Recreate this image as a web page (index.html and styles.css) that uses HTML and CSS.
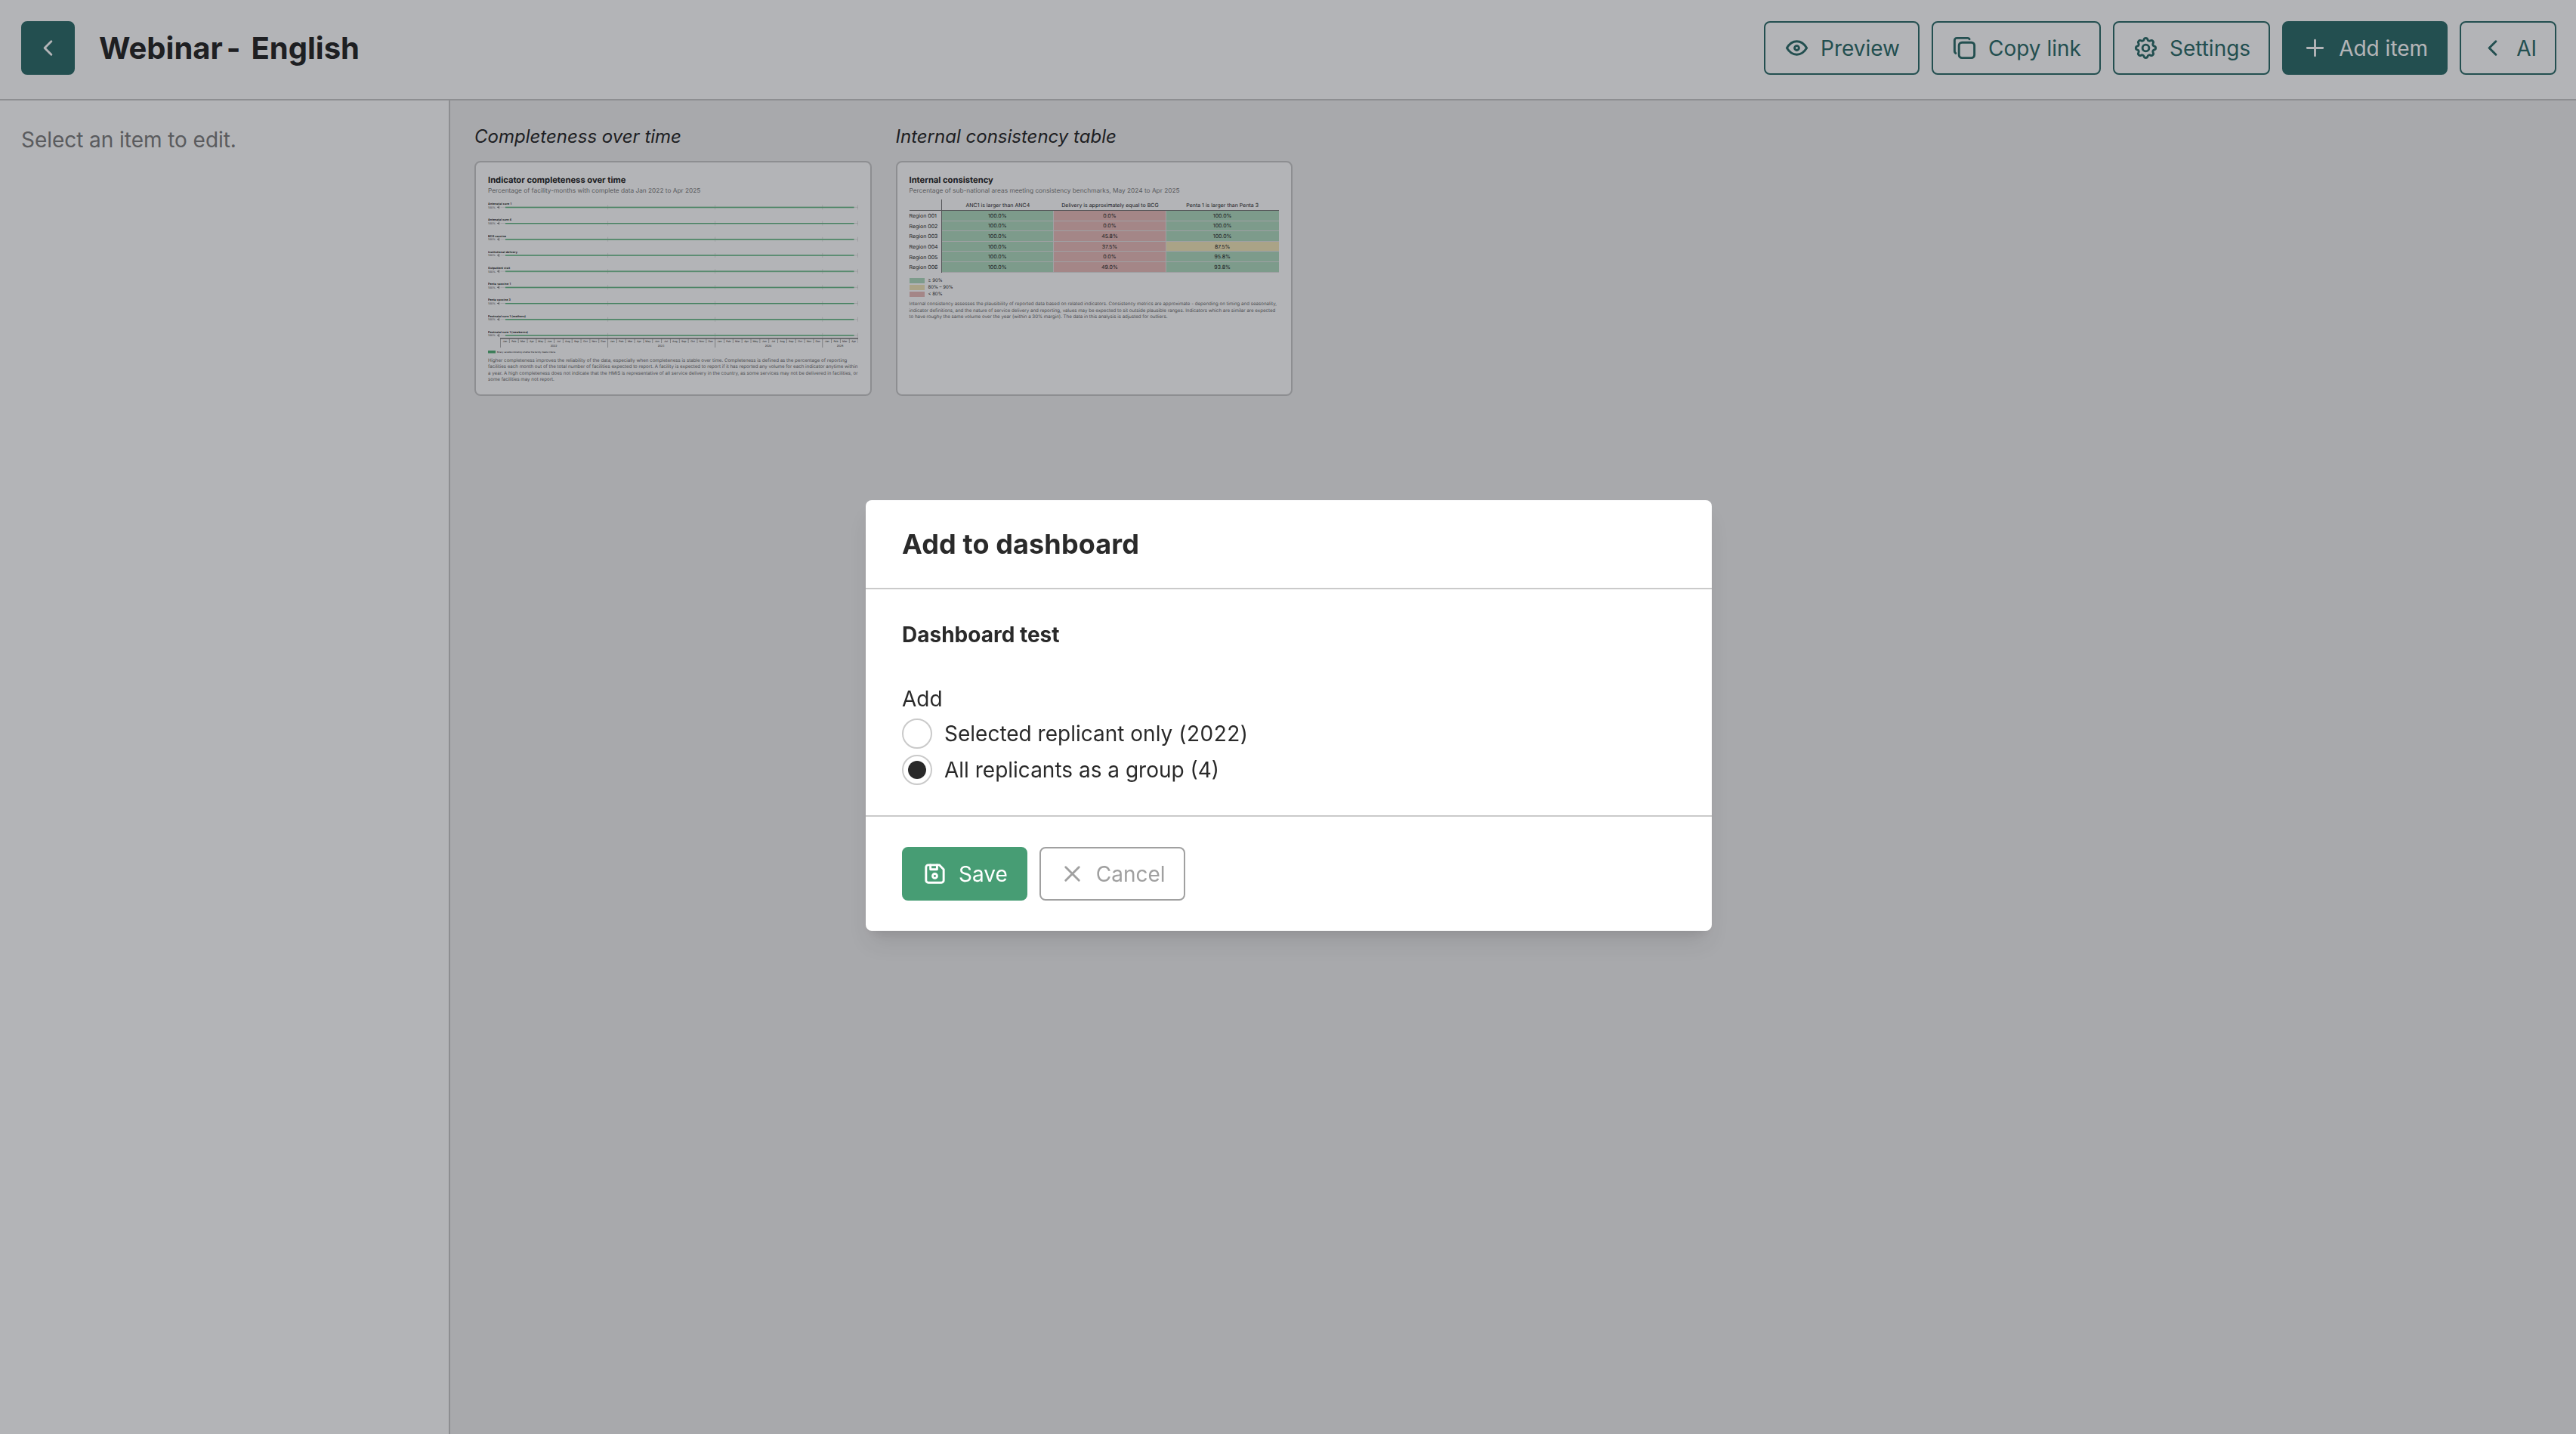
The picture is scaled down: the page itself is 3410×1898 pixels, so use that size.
FILE: index.html
```html
<!DOCTYPE html>
<html lang="en">
<head>
  <meta charset="UTF-8">
  <title>Webinar - English</title>
  <link rel="stylesheet" href="styles.css">
</head>
<body>
  <header class="topbar">
    <button class="btn btn-solid">
      <svg class="icon" viewBox="0 0 24 24"><path d="M15 6l-6 6l6 6"/></svg>
    </button>
    <h1>Webinar<span class="dash">-</span> &nbsp;English</h1>
    <div class="actions">
      <button class="btn">
        <svg class="icon" viewBox="0 0 24 24"><path d="M10 12a2 2 0 1 0 4 0a2 2 0 0 0 -4 0"/><path d="M21 12c-2.400 4 -5.400 6 -9 6c-3.600 0 -6.600 -2 -9 -6c2.400 -4 5.400 -6 9 -6c3.600 0 6.600 2 9 6"/></svg>
        Preview
      </button>
      <button class="btn">
        <svg class="icon" viewBox="0 0 24 24"><path d="M7 9.667a2.667 2.667 0 0 1 2.667 -2.667h8.666a2.667 2.667 0 0 1 2.667 2.667v8.666a2.667 2.667 0 0 1 -2.667 2.667h-8.666a2.667 2.667 0 0 1 -2.667 -2.667z"/><path d="M4.012 16.737a2.005 2.005 0 0 1 -1.012 -1.737v-10c0 -1.100 .9 -2 2 -2h10c.75 0 1.158 .385 1.500 1"/></svg>
        Copy link
      </button>
      <button class="btn">
        <svg class="icon" viewBox="0 0 24 24"><path d="M10.325 4.317c.426 -1.756 2.924 -1.756 3.350 0a1.724 1.724 0 0 0 2.573 1.066c1.543 -.94 3.310 .826 2.370 2.370a1.724 1.724 0 0 0 1.065 2.572c1.756 .426 1.756 2.924 0 3.350a1.724 1.724 0 0 0 -1.066 2.573c.94 1.543 -.826 3.310 -2.370 2.370a1.724 1.724 0 0 0 -2.572 1.065c-.426 1.756 -2.924 1.756 -3.350 0a1.724 1.724 0 0 0 -2.573 -1.066c-1.543 .94 -3.310 -.826 -2.370 -2.370a1.724 1.724 0 0 0 -1.065 -2.572c-1.756 -.426 -1.756 -2.924 0 -3.350a1.724 1.724 0 0 0 1.066 -2.573c-.94 -1.543 .826 -3.310 2.370 -2.370c1 .608 2.296 .07 2.572 -1.065z"/><path d="M9 12a3 3 0 1 0 6 0a3 3 0 0 0 -6 0"/></svg>
        Settings
      </button>
      <button class="btn btn-solid">
        <svg class="icon" viewBox="0 0 24 24"><path d="M12 5v14M5 12h14"/></svg>
        Add item
      </button>
      <button class="btn">
        <svg class="icon" viewBox="0 0 24 24"><path d="M15 6l-6 6l6 6"/></svg>
        AI
      </button>
    </div>
  </header>

  <div class="layout">
    <aside class="sidebar">Select an item to edit.</aside>
    <main class="items">
      <section class="item">
        <div class="item-label">Completeness over time</div>
        <div class="card">
          <h3>Indicator completeness over time</h3>
          <p class="sub">Percentage of facility-months with complete data Jan 2022 to Apr 2025</p>
          <svg class="chart" id="chart" viewBox="0 0 490 206"></svg>
          <p class="note">
            Higher completeness improves the reliability of the data, especially when completeness is stable over time. Completeness is defined as the percentage of reporting<br>
            facilities each month out of the total number of facilities expected to report. A facility is expected to report if it has reported any volume for each indicator anytime within<br>
            a year. A high completeness does not indicate that the HMIS is representative of all service delivery in the country, as some services may not be delivered in facilities, or<br>
            some facilities may not report.
          </p>
        </div>
      </section>
      <section class="item">
        <div class="item-label">Internal consistency table</div>
        <div class="card">
          <h3>Internal consistency</h3>
          <p class="sub">Percentage of sub-national areas meeting consistency benchmarks, May 2024 to Apr 2025</p>
          <table>
            <thead>
              <tr><th></th><th>ANC1 is larger than ANC4</th><th>Delivery is approximately equal to BCG</th><th>Penta 1 is larger than Penta 3</th></tr>
            </thead>
            <tbody>
              <tr><th>Region 001</th><td class="good">100.0%</td><td class="bad">0.0%</td><td class="good">100.0%</td></tr>
              <tr><th>Region 002</th><td class="good">100.0%</td><td class="bad">0.0%</td><td class="good">100.0%</td></tr>
              <tr><th>Region 003</th><td class="good">100.0%</td><td class="bad">45.8%</td><td class="good">100.0%</td></tr>
              <tr><th>Region 004</th><td class="good">100.0%</td><td class="bad">37.5%</td><td class="mid">87.5%</td></tr>
              <tr><th>Region 005</th><td class="good">100.0%</td><td class="bad">0.0%</td><td class="good">95.8%</td></tr>
              <tr><th>Region 006</th><td class="good">100.0%</td><td class="bad">49.0%</td><td class="good">93.8%</td></tr>
            </tbody>
          </table>
          <ul class="legend">
            <li><i class="good"></i>≥ 90%</li>
            <li><i class="mid"></i>80% – 90%</li>
            <li><i class="bad"></i>&lt; 80%</li>
          </ul>
          <p class="note">
            Internal consistency assesses the plausibility of reported data based on related indicators. Consistency metrics are approximate - depending on timing and seasonality,<br>
            indicator definitions, and the nature of service delivery and reporting, values may be expected to sit outside plausible ranges. Indicators which are similar are expected<br>
            to have roughy the same volume over the year (within a 30% margin). The data in this analysis is adjusted for outliers.
          </p>
        </div>
      </section>
    </main>
  </div>

  <div class="overlay">
    <div class="modal">
      <div class="modal-header">Add to dashboard</div>
      <div class="modal-body">
        <div class="modal-name">Dashboard test</div>
        <div class="field-label">Add</div>
        <label class="radio"><span class="dot"></span><span>Selected replicant only <span class="year">(2022)</span></span></label>
        <label class="radio checked"><span class="dot"></span>All replicants as a group (4)</label>
      </div>
      <div class="modal-footer">
        <button class="btn btn-save">
          <svg class="icon" viewBox="0 0 24 24"><path d="M6 4h10l4 4v10a2 2 0 0 1 -2 2h-12a2 2 0 0 1 -2 -2v-12a2 2 0 0 1 2 -2"/><path d="M10 14a2 2 0 1 0 4 0a2 2 0 1 0 -4 0"/><path d="M14 4v4h-6v-4"/></svg>
          Save
        </button>
        <button class="btn btn-cancel">
          <svg class="icon" viewBox="0 0 24 24"><path d="M18 6l-12 12M6 6l12 12"/></svg>
          Cancel
        </button>
      </div>
    </div>
  </div>

  <script>
    const indicators = [
      "Antenatal care 1", "Antenatal care 4", "BCG vaccine",
      "Institutional delivery", "Outpatient visit", "Penta vaccine 1",
      "Penta vaccine 3", "Postnatal care 1 (mothers)", "Postnatal care 1 (newborns)"
    ];
    const widths = [31, 31, 24, 39, 29, 30, 30, 50, 53];
    const months = ["Jan", "Feb", "Mar", "Apr", "May", "Jun", "Jul", "Aug", "Sep", "Oct", "Nov", "Dec"];
    const left = 16.5, step = 11.84;
    let out = "";

    indicators.forEach((name, i) => {
      const y = 11.3 + i * 21.2;
      out += `<text class="name" x="0" y="${y - 3.2}" textLength="${widths[i]}">${name}</text>
        <text class="tick" x="0" y="${y + 1.5}" textLength="10">100%</text>
        <path class="mark" d="M12 ${y}h3M14.5 ${y - 2}v4"/>
        <path class="grid" d="M16.5 ${y}H490M158.6 ${y - 3}v6M300.6 ${y - 3}v6M442.7 ${y - 3}v6M489.5 ${y - 3}v6"/>
        <path class="band" d="M23 ${y + .3}H484.5"/>
        <path class="line" d="M23 ${y}H484.5"/>`;
    });

    out += `<path class="axis" d="M16 185H490"/>`;
    for (let m = 0; m <= 40; m++) {
      const x = left + m * step;
      const long = m % 12 === 0;
      out += `<path class="sep" d="M${x} 185v${long ? 12 : 6}"/>`;
      if (m < 40) out += `<text class="month" x="${x + step / 2}" y="190.3">${months[m % 12]}</text>`;
    }
    [[2022, 71], [2023, 213], [2024, 355], [2025, 450]].forEach(([year, x]) => {
      out += `<text class="month" x="${x + left - 16.5 + 16}" y="196.2">${year}</text>`;
    });
    out += `<rect class="swatch" x="0" y="201" width="10" height="3.500"/>
      <text class="key" x="12" y="203.8" textLength="77">Binary variable indicating whether the facility meets criteria</text>`;
    document.getElementById("chart").innerHTML = out;
  </script>
</body>
</html>
```
FILE: styles.css
```css
* {
  box-sizing: border-box;
}

body {
  margin: 0;
  height: 1898px;
  overflow: hidden;
  display: flex;
  flex-direction: column;
  font-family: Inter, "Liberation Sans", sans-serif;
  font-size: 28px;
  line-height: 40px;
  color: #2a2a2a;
  background: #fff;
}

h1, h3, p, ul {
  margin: 0;
  padding: 0;
}

/* top bar */
.topbar {
  display: flex;
  align-items: center;
  height: 133px;
  padding: 0 26px 4px 28px;
  border-bottom: 2px solid #c9c9c9;
}

.topbar h1 {
  margin-left: 32px;
  font-size: 40px;
  font-weight: 700;
}

.dash {
  margin: 0 -5px 0 5px;
}

.actions {
  display: flex;
  gap: 16px;
  margin-left: auto;
}

.btn {
  display: flex;
  align-items: center;
  gap: 14px;
  height: 71px;
  padding: 0 24px;
  border: 2px solid #326f6c;
  border-radius: 8px;
  background: none;
  color: #326f6c;
  font: inherit;
  white-space: nowrap;
}

.topbar > .btn {
  padding: 0 16px;
}

.btn-solid {
  background: #326f6c;
  color: #fff;
}

.icon {
  width: 35px;
  height: 35px;
  flex: none;
  fill: none;
  stroke: currentColor;
  stroke-width: 2;
  stroke-linecap: round;
  stroke-linejoin: round;
}

/* page */
.layout {
  flex: 1;
  display: flex;
}

.sidebar {
  width: 596px;
  padding: 32px 28px;
  border-right: 2px solid #c9c9c9;
  color: #808080;
  letter-spacing: -.05px;
}

.items {
  flex: 1;
  display: flex;
  align-items: flex-start;
  gap: 32px;
  padding: 32px;
  background: #f0f0f0;
}

.item {
  width: 525.5px;
}

.item-label {
  height: 32px;
  margin-bottom: 16px;
  line-height: 32px;
  font-size: 24px;
  font-style: italic;
  white-space: nowrap;
}

.card {
  height: 311px;
  padding: 16px;
  border: 2px solid #c9c9c9;
  border-radius: 8px;
  background: #fff;
  white-space: nowrap;
  text-rendering: geometricPrecision;
}

.card h3 {
  font-size: 11.2px;
  line-height: 14px;
}

.sub {
  margin-top: 1px;
  font-size: 8.3px;
  line-height: 14px;
  color: #808080;
}

.note {
  font-size: 6.17px;
  line-height: 8.3px;
  color: #707070;
}

.chart {
  display: block;
  width: 490px;
  height: 206px;
  margin: 3px 0 5px;
}

.chart .name {
  font-size: 3.7px;
  font-weight: 700;
  fill: #2a2a2a;
}

.chart .tick, .chart .month {
  font-size: 3.5px;
  fill: #2a2a2a;
}

.chart .month {
  text-anchor: middle;
}

.chart .key {
  font-size: 2.8px;
  fill: #2a2a2a;
}

.chart .mark {
  stroke: #555;
  stroke-width: .7;
}

.chart .grid {
  fill: none;
  stroke: #d0d0d0;
  stroke-width: .6;
}

.chart .band {
  stroke: #a6d8b8;
  stroke-width: 1.8;
}

.chart .line {
  stroke: #55b077;
  stroke-width: .9;
}

.chart .axis {
  stroke: #777;
  stroke-width: 1.4;
}

.chart .sep {
  stroke: #808080;
  stroke-width: .6;
}

.chart .swatch {
  fill: #55b077;
}

/* consistency table */
table {
  width: 489px;
  table-layout: fixed;
  border-collapse: separate;
  border-spacing: 0;
  margin-top: 4px;
  font-size: 7px;
  line-height: 9px;
}

th, td {
  height: 13.6px;
  padding: 0;
  text-align: center;
  font-weight: 400;
}

thead th {
  height: 15px;
  border-bottom: 1px solid #777;
}

tr > :first-child {
  width: 43px;
  text-align: left;
  border-right: 1px solid #777;
}

td {
  border: solid #e4e4e4;
  border-width: 0 1px 1px 0;
}

td:last-child {
  border-right: 0;
}

.good {
  background: #b2dbc1;
}

.mid {
  background: #f3e7ba;
}

.bad {
  background: #eabebb;
}

.legend {
  display: flex;
  flex-direction: column;
  gap: 2.4px;
  margin: 7px 0 6px;
  list-style: none;
  font-size: 6px;
  line-height: 7px;
}

.legend li {
  display: flex;
  gap: 5px;
}

.legend i {
  width: 20px;
  height: 7px;
}

/* modal */
.overlay {
  position: fixed;
  inset: 0;
  display: flex;
  align-items: center;
  justify-content: center;
  padding: 0 0 4px 2px;
  background: rgba(3, 7, 18, .3);
}

.modal {
  width: 1120px;
  border-radius: 8px;
  background: #fff;
  box-shadow: 0 20px 30px -6px rgba(0, 0, 0, .1), 0 8px 12px -8px rgba(0, 0, 0, .1);
}

.modal-header {
  height: 118px;
  padding: 36px 48px;
  border-bottom: 2px solid #cacaca;
  font-size: 36px;
  line-height: 44px;
  font-weight: 700;
  letter-spacing: .12px;
}

.modal-body {
  height: 299px;
  padding: 40px 48px;
}

.modal-name {
  font-weight: 700;
}

.field-label {
  margin-top: 45px;
  margin-bottom: 6px;
}

.radio {
  display: flex;
  align-items: center;
  gap: 16px;
  margin-bottom: 8px;
}

.year {
  letter-spacing: .5px;
}

.dot {
  display: flex;
  align-items: center;
  justify-content: center;
  width: 40px;
  height: 40px;
  border: 2px solid #cacaca;
  border-radius: 50%;
}

.checked .dot::after {
  content: "";
  width: 24px;
  height: 24px;
  border-radius: 50%;
  background: #2a2a2a;
}

.modal-footer {
  display: flex;
  gap: 16px;
  height: 153px;
  padding: 40px 48px;
  border-top: 2px solid #cacaca;
}

.btn-save {
  border-color: #479d74;
  background: #479d74;
  color: #fff;
}

.btn-cancel {
  border-color: #a0a0a0;
  color: #a0a0a0;
}
```
